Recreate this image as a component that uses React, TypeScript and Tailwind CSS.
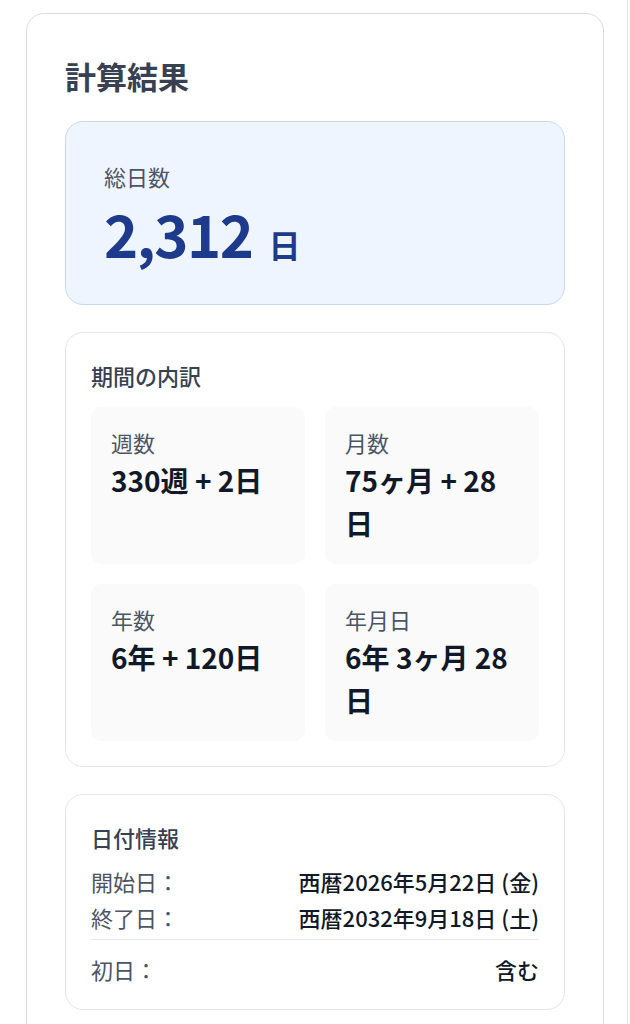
import React from 'react';

const font = { fontFamily: '"Noto Sans CJK JP", "Noto Sans", sans-serif' };

interface Breakdown {
  label: string;
  value: string;
}

const breakdown: Breakdown[] = [
  { label: '週数', value: '330週 + 2日' },
  { label: '月数', value: '75ヶ月 + 28日' },
  { label: '年数', value: '6年 + 120日' },
  { label: '年月日', value: '6年 3ヶ月 28日' },
];

const InfoRow: React.FC<{ label: string; value: string }> = ({ label, value }) => (
  <div className="flex items-center justify-between h-[36px]">
    <span className="text-[22px] text-[#4b5563]">{label}</span>
    <span className="text-[22px] font-medium text-[#111827]">{value}</span>
  </div>
);

export default function App() {
  return (
    <div className="min-h-screen bg-white w-[628px] border-r border-[#e5e7eb] pt-[13px] pl-[26px]" style={font}>
      <div className="w-[578px] border border-[#d9dbe0] rounded-[18px] px-[38px] pt-[39px] pb-[40px] bg-white">
        {/* Title */}
        <h2 className="text-[31px] leading-[46px] font-bold text-[#374151]">計算結果</h2>

        <div className="mt-[22px] flex flex-col gap-[27px]">
          {/* Total days */}
          <div className="bg-[#eff5fe] border border-[#c6d8f3] rounded-[18px] px-[38px] pt-[38px] pb-[39px]">
            <div className="text-[22px] leading-[33px] text-[#4b5563]">総日数</div>
            <div className="mt-[8px] h-[64px] flex items-baseline gap-[16px] text-[#1e3a8a] font-bold">
              <span className="text-[58px] leading-[64px] tracking-tight">2,312</span>
              <span className="text-[32px] leading-[32px]">日</span>
            </div>
          </div>

          {/* Breakdown */}
          <div className="border border-[#e3e5e8] rounded-[18px] px-[25px] pt-[26px] pb-[25px]">
            <h3 className="text-[22px] leading-[33px] font-medium text-[#374151] mb-[15px]">期間の内訳</h3>
            <div className="grid grid-cols-2 gap-[20px]">
              {breakdown.map((b) => (
                <div key={b.label} className="bg-[#fafafa] rounded-[10px] px-[20px] py-[19px] min-h-[156px]">
                  <div className="text-[22px] leading-[33px] text-[#4b5563]">{b.label}</div>
                  <div className="text-[28px] leading-[43px] font-bold text-[#111827]">{b.value}</div>
                </div>
              ))}
            </div>
          </div>

          {/* Date info */}
          <div className="border border-[#e3e5e8] rounded-[18px] px-[25px] pt-[26px] pb-[22px]">
            <h3 className="text-[22px] leading-[33px] font-medium text-[#374151] mb-[9px]">日付情報</h3>
            <InfoRow label="開始日：" value="西暦2026年5月22日 (金)" />
            <InfoRow label="終了日：" value="西暦2032年9月18日 (土)" />
            <div className="mt-[4px] pt-[11px] border-t border-[#e5e7eb]">
              <InfoRow label="初日：" value="含む" />
            </div>
          </div>
        </div>
      </div>
    </div>
  );
}
